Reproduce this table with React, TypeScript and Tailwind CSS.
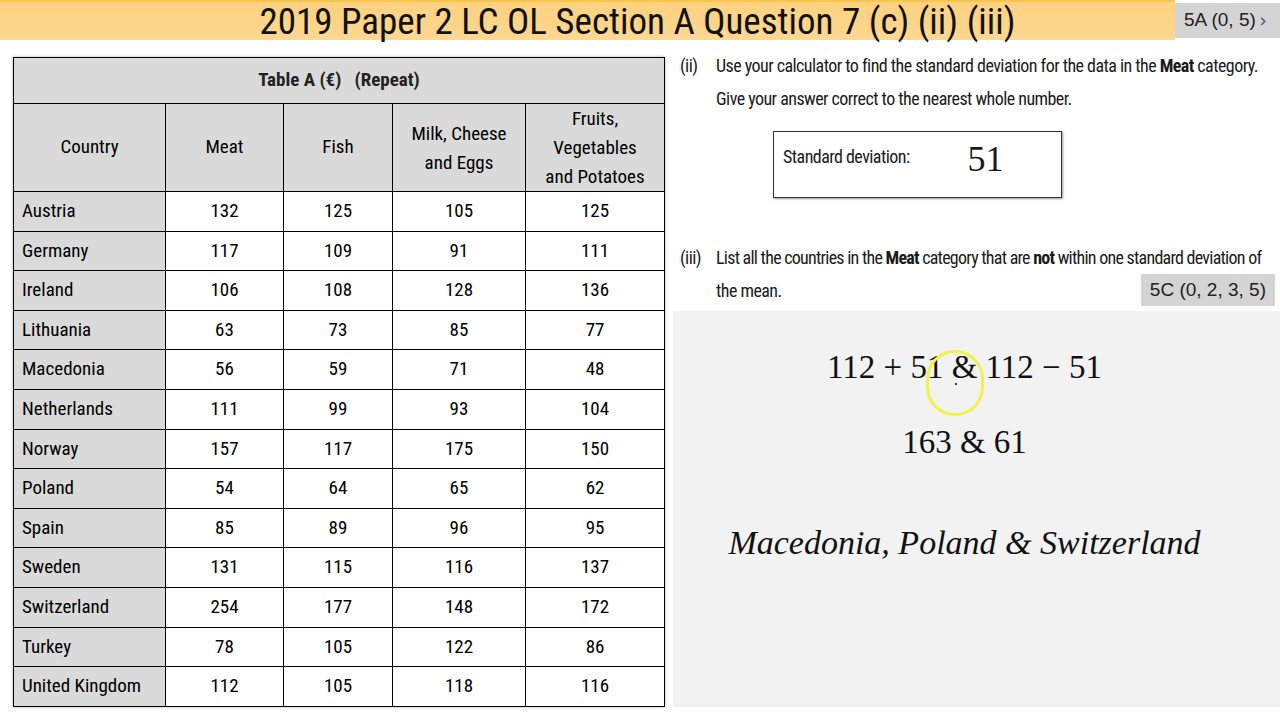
import React from "react"

const rows: [string, number, number, number, number][] = [
  ["Austria", 132, 125, 105, 125],
  ["Germany", 117, 109, 91, 111],
  ["Ireland", 106, 108, 128, 136],
  ["Lithuania", 63, 73, 85, 77],
  ["Macedonia", 56, 59, 71, 48],
  ["Netherlands", 111, 99, 93, 104],
  ["Norway", 157, 117, 175, 150],
  ["Poland", 54, 64, 65, 62],
  ["Spain", 85, 89, 96, 95],
  ["Sweden", 131, 115, 116, 137],
  ["Switzerland", 254, 177, 148, 172],
  ["Turkey", 78, 105, 122, 86],
  ["United Kingdom", 112, 105, 118, 116],
]

const narrow = "font-['Liberation_Sans_Narrow','Roboto_Condensed','Liberation_Sans',sans-serif]"

export default function App() {
  return (
    <div className={`w-[1280px] h-[720px] bg-white overflow-hidden text-black ${narrow}`}>
      {/* title bar */}
      <div className="flex h-[40px]">
        <div className="flex-1 bg-gradient-to-b from-[#fdd17e] to-[#fdd891] border-t-2 border-[#f7c64f] flex items-center justify-center">
          <span className="text-[37px] leading-none text-[#111] pl-[100px]">2019 Paper 2 LC OL Section A Question 7 (c) (ii) (iii)</span>
        </div>
        <div className="w-[105px] mt-[3px] h-[35px] bg-[#d4d4d4] flex items-center pl-[9px] text-[19px] text-[#222] font-['Liberation_Sans',sans-serif]">
          5A (0, 5) <span className="ml-1 text-[#555]">›</span>
        </div>
      </div>

      <div className="flex">
        {/* table */}
        <div className="pl-[13px] pt-[17px] w-[673px] shrink-0">
          <table className="table-fixed w-[651px] border-collapse border border-black text-[19px] shadow-[0_0_3px_rgba(0,0,0,0.3)]">
            <colgroup>
              <col className="w-[152px]" />
              <col className="w-[118px]" />
              <col className="w-[109px]" />
              <col className="w-[133px]" />
              <col className="w-[139px]" />
            </colgroup>
            <thead>
              <tr className="h-[46px] bg-[#dadada]">
                <th colSpan={5} className="font-bold text-[19px] border border-black text-[#222]">Table A (€) &nbsp; (Repeat)</th>
              </tr>
              <tr className="h-[87px] bg-[#dadada] font-normal">
                <th className="font-normal border border-black">Country</th>
                <th className="font-normal border border-black">Meat</th>
                <th className="font-normal border border-black">Fish</th>
                <th className="font-normal border border-black leading-[29px]">Milk, Cheese<br />and Eggs</th>
                <th className="font-normal border border-black leading-[29px]">Fruits,<br />Vegetables<br />and Potatoes</th>
              </tr>
            </thead>
            <tbody>
              {rows.map((r) => (
                <tr key={r[0]} className="h-[39.6px]">
                  <td className="bg-[#dadada] border border-black pl-[8px] whitespace-nowrap">{r[0]}</td>
                  {r.slice(1).map((v, i) => (
                    <td key={i} className="bg-white border border-black text-center">{v}</td>
                  ))}
                </tr>
              ))}
            </tbody>
          </table>
        </div>

        {/* right side */}
        <div className="flex-1 flex flex-col min-w-0">
          <div className="pl-[7px] pt-[9px] text-[18px] tracking-[-0.55px] text-[#1a1a1a] leading-[33px]">
            <div className="flex">
              <span className="w-[36px] shrink-0">(ii)</span>
              <div>
                <div className="whitespace-nowrap">Use your calculator to find the standard deviation for the data in the <b>Meat</b> category.</div>
                <div>Give your answer correct to the nearest whole number.</div>
              </div>
            </div>
            <div className="ml-[93px] mt-[16px] w-[289px] h-[67px] border border-[#333] shadow-[1px_1px_2px_rgba(0,0,0,0.4)] flex items-start pt-[10px] pl-[9px]">
              <span className="leading-[30px]">Standard deviation:</span>
              <span className="ml-[58px] font-['Liberation_Serif',serif] text-[36px] leading-[34px] tracking-normal">51</span>
            </div>
            <div className="flex mt-[43px]">
              <span className="w-[36px] shrink-0">(iii)</span>
              <div className="flex-1">
                <div className="whitespace-nowrap tracking-[-0.75px]">List all the countries in the <b>Meat</b> category that are <b>not</b> within one standard deviation of</div>
                <div className="flex items-start justify-between">
                  <span>the mean.</span>
                  <span className="bg-[#d4d4d4] text-[19px] tracking-normal leading-[32px] px-[9px] mr-[5px] font-['Liberation_Sans',sans-serif] text-[#222]">5C (0, 2, 3, 5)</span>
                </div>
              </div>
            </div>
          </div>

          <div className="relative mt-[4px] flex-1 bg-[#f2f2f2] flex flex-col items-center font-['Liberation_Serif',serif] text-[#111]">
            <div className="mt-[37px] text-[33px] leading-[38px] pr-[24px]">112 + 51 &amp; 112 − 51</div>
            <div className="mt-[37px] text-[33px] leading-[38px] pr-[24px]">163 &amp; 61</div>
            <div className="mt-[63px] text-[34px] leading-[38px] italic pr-[24px]">Macedonia, Poland &amp; Switzerland</div>
            <div className="absolute left-[253px] top-[39px] w-[58px] h-[66px] rounded-full border-[3px] border-[#f2f24a]" />
            <div className="absolute left-[282px] top-[72px] w-[2px] h-[2px] bg-black rounded-full" />
          </div>
        </div>
      </div>
    </div>
  )
}
